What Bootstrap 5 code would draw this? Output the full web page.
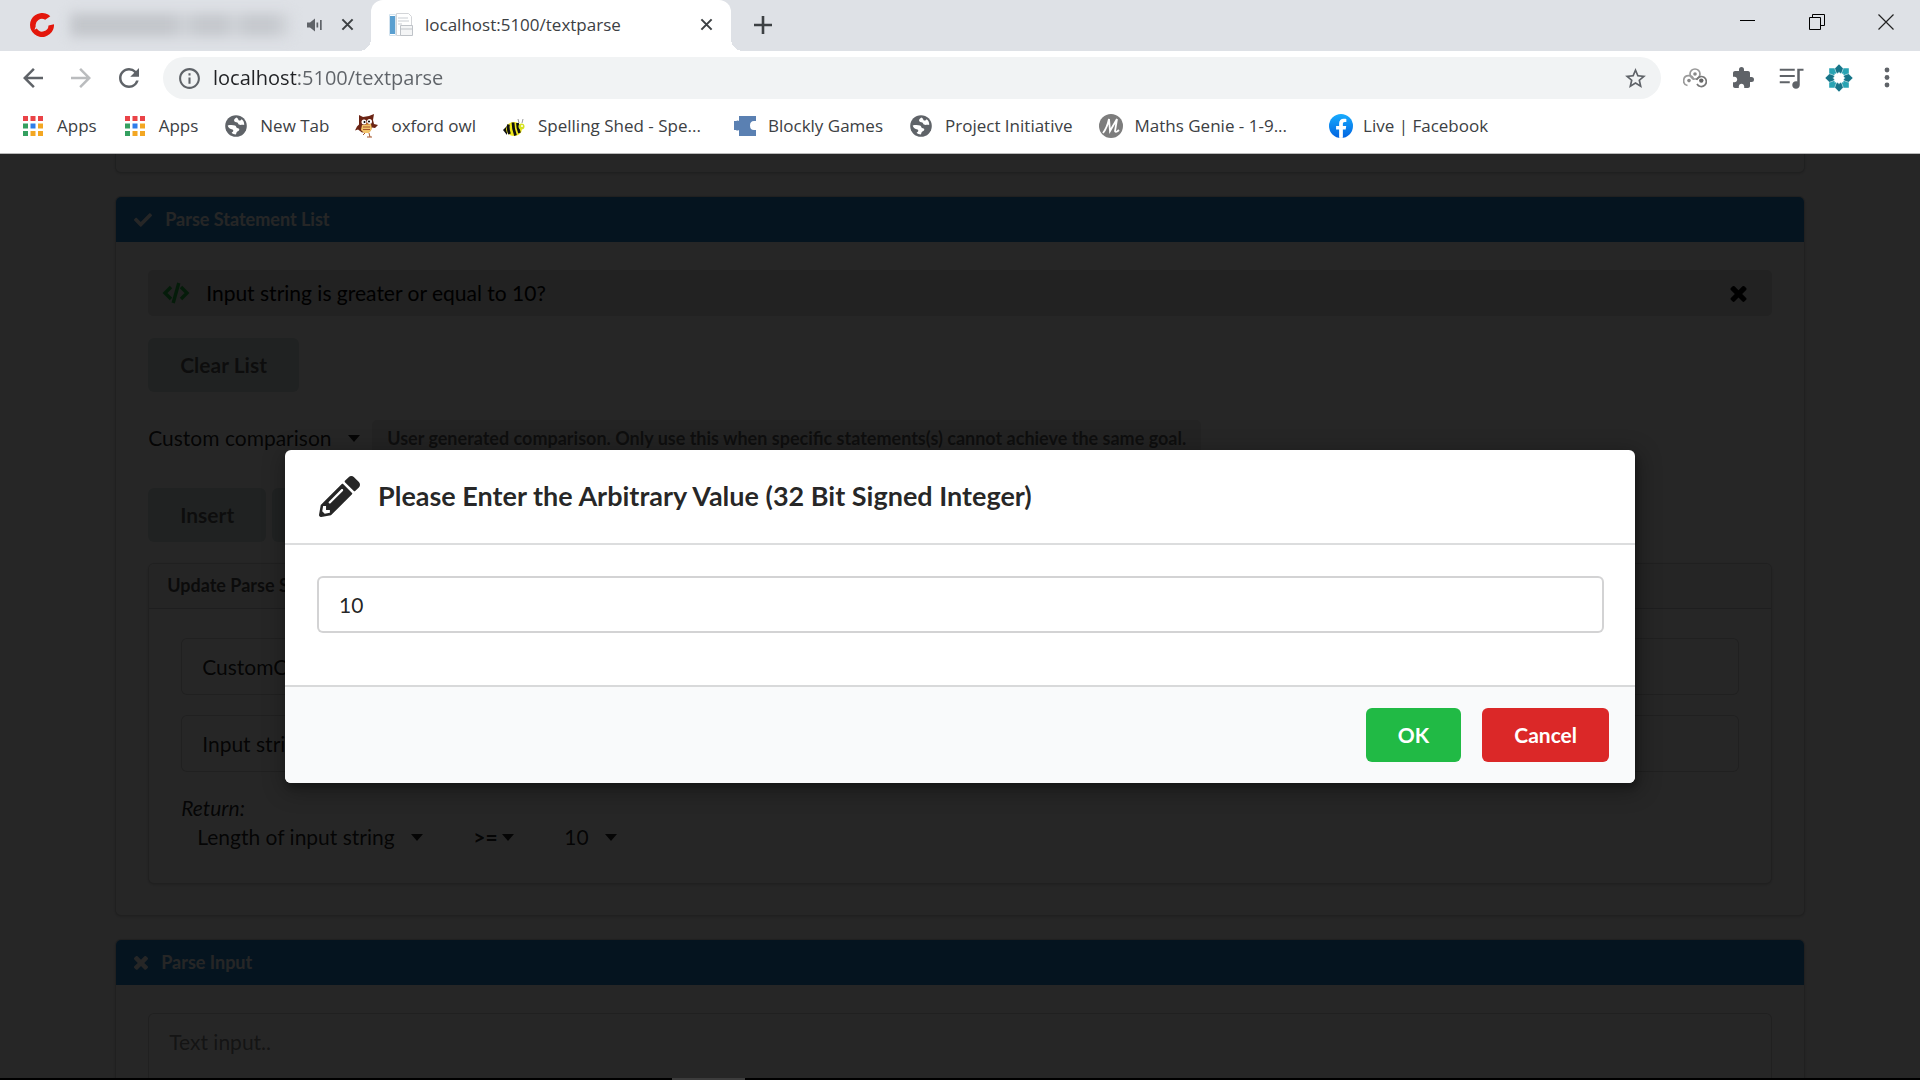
<!DOCTYPE html>
<html lang="en">
<head>
<meta charset="utf-8">
<meta name="viewport" content="width=device-width, initial-scale=1">
<title>localhost:5100/textparse</title>
<link href="https://cdn.jsdelivr.net/npm/bootstrap@5.3.0/dist/css/bootstrap.min.css" rel="stylesheet">
<style>
  :root { --line: rgba(34,36,38,.2); --ink: rgba(0,0,0,.87); }
  body { font-family: "Lato", sans-serif; font-size: 21px; line-height: 30px; color: var(--ink); overflow: hidden; background: #000; }
  svg { display: block; flex: none; }
  button.bare { border: 0; background: none; padding: 0; color: inherit; display: flex; align-items: center; justify-content: center; }

  /* browser frame */
  .chrome { font-family: "Open Sans", "Noto Sans", sans-serif; color: #3c4043; background: #fff; border-bottom: 1px solid #b9b9b9; }
  .tabstrip { background: #dee1e6; height: 51px; }
  .tab-item { height: 51px; padding: 0 18px 2px; }
  .tab-first { width: 371px; padding-left: 30px; padding-right: 17px; }
  .tab-first .bare { margin-left: 18px; }
  .tab-active { width: 360px; background: #fff; border-radius: 12px 12px 0 0; position: relative; font-size: 17px; gap: 12px; }
  .tab-active::before, .tab-active::after { content: ""; position: absolute; bottom: 0; width: 12px; height: 12px; }
  .tab-active::before { left: -12px; background: radial-gradient(circle at 0 0, transparent 12px, #fff 12px); }
  .tab-active::after { right: -12px; background: radial-gradient(circle at 100% 0, transparent 12px, #fff 12px); }
  .blurred { height: 24px; filter: blur(6px); background: linear-gradient(90deg, #c3c6cb 0 45%, #cfd2d7 52%, #c5c8cd 58% 70%, #d0d3d8 74%, #c6c9ce 80% 92%, #d6d9de); }
  .tabstrip .plus-btn { padding-bottom: 2px; width: 20px; margin-left: 22px; }
  .win-btn { width: 69px; height: 43px; }
  .toolbar { padding: 6px 18px 0; }
  .tool-group { gap: 18px; }
  .tool-btn { width: 30px; height: 30px; }
  .omnibox { background: #f1f3f4; border-radius: 21px; height: 42px; margin: 0 19px; padding: 0 11px; }
  .omnibox input { border: 0; outline: 0; padding: 0; margin-left: 9px; font-size: 20px; color: transparent; background: linear-gradient(90deg, #202124 84px, #5f6368 84px); -webkit-background-clip: text; background-clip: text; }
  .bookmarks { height: 54px; padding: 0 21px; gap: 26px; font-size: 17px; }
  .bookmarks a { color: #3c4043; text-decoration: none; gap: 12px; white-space: nowrap; }
  .bookmarks .bm-wide { min-width: 204px; }
  .bookmarks .bm-last { margin-left: 16px; gap: 10px; }

  /* page */
  .viewport { margin-bottom: 2px; background: #fff; }
  .page-col { width: 88%; margin: 0 auto; }
  .panel { border: 1px solid var(--line); border-radius: 6px; box-shadow: 0 1px 3px var(--line); margin-bottom: 23px; background: #fff; color: inherit; }
  .panel .panel-head { height: 45px; padding: 0 18px; font-size: 18px; font-weight: 700; background: #2185d0; color: #fff; border-radius: 5px 5px 0 0; gap: 13px; border: 0; }
  .panel .panel-body { padding: 28px 32px 31px; }
  .panel-tail { height: 19px; border-top: 0; border-radius: 0 0 6px 6px; }
  .inner { margin: 21px 0 0; }
  .inner .panel-head { background: #f3f4f5; color: rgba(0,0,0,.7); border-bottom: 1px solid var(--line); }
  .inner .panel-body { padding: 29px 32px 31px; }
  .statement { background: #e0e0e0; border-radius: 5px; height: 46px; padding: 0 25px 0 14px; gap: 16px; color: #000; }
  .btn-pad { font-size: 21px; line-height: 24px; font-weight: 700; padding: 15px 32px; border: 0; border-radius: 6px; }
  .btn-soft, .btn-soft:hover { background: #d6e2e2; color: rgba(0,0,0,.6); }
  .clear-btn { margin: 22px 0 28px; }
  .insert-row { gap: 6px; margin-top: 32px; }
  .field { font-family: inherit; font-size: 21px; line-height: 30px; height: 57px; padding: 0 20px; border: 2px solid var(--line); border-radius: 6px; color: var(--ink); }
  .panel .field { border-width: 1px; }
  .panel .field + .field { margin-top: 20px; }
  .panel textarea.field { height: 200px; padding: 13px 20px; }
  textarea.field::placeholder { color: rgba(120,120,120,.9); }
  .pick { appearance: none; border: 0; background: none; padding: 0; font: inherit; color: inherit; }
  .pick + svg { margin-left: 16px; }
  .pick-op + svg { margin-left: 4px; }
  .return-label { margin-top: 21px; line-height: 29px; }
  .return-row .pick ~ .pick { margin-left: 50px; }
  .hint { background: #e8e8e8; color: rgba(0,0,0,.6); font-size: 18px; font-weight: 700; line-height: 36px; padding: 0 15px; margin-left: 12px; border-radius: 5px; }

  /* dialog */
  .dimmer { background: rgba(0,0,0,.85); padding: 0 24px; }
  .dialog { width: 1350px; max-width: 100%; border: 0; border-radius: 6px; box-shadow: 2px 5px 5px rgba(0,0,0,.2), 2px 5px 22px 3px rgba(0,0,0,.3); }
  .dialog .modal-header { height: 95px; padding: 0 34px; justify-content: flex-start; gap: 18px; border-bottom: 2px solid #dcddde; }
  .dialog .modal-header h1 { font-size: 27px; line-height: 36px; font-weight: 700; margin: 0; color: rgba(0,0,0,.85); }
  .dialog .modal-body { padding: 31px 31px 52px 32px; flex: none; }
  .dialog .modal-footer { padding: 21px 26px; gap: 21px; background: #f9fafb; border-top: 2px solid #d8d9da; border-radius: 0 0 6px 6px; }
  .dialog .modal-footer > * { margin: 0; }
  .btn-ok { background: #21ba45; color: #fff; }
  .btn-no { background: #db2828; color: #fff; }
  .grip { position: absolute; left: 35%; bottom: 0; width: 73px; height: 2px; background: #3c3c3c; }
</style>
</head>
<body class="vh-100 d-flex flex-column position-relative">

<svg width="0" height="0" class="position-absolute" aria-hidden="true">
  <symbol id="i-caret" viewBox="0 0 12 7"><path d="M0 0h12L6 7z" fill="currentColor"/></symbol>
  <symbol id="i-times" viewBox="300 300 1192 1256"><path fill="currentColor" d="M1490 1322q0 40-28 68l-136 136q-28 28-68 28t-68-28l-294-294-294 294q-28 28-68 28t-68-28l-136-136q-28-28-28-68t28-68l294-294-294-294q-28-28-28-68t28-68l136-136q28-28 68-28t68 28l294 294 294-294q28-28 68-28t68 28l136 136q28 28 28 68t-28 68l-294 294 294 294q28 28 28 68z"/></symbol>
  <symbol id="i-apps" viewBox="0 0 20 20"><path fill="#ea4347" d="M0 0h5v5H0zM7.500 0h5v5h-5zM15 0h5v5h-5z"/><path fill="#34a060" d="M0 7.500h5v5H0zM0 15h5v5H0z"/><path fill="#2f7de9" d="M7.500 7.500h5v5h-5z"/><path fill="#f3a723" d="M15 7.500h5v5h-5zM7.500 15h5v5h-5zM15 15h5v5h-5z"/></symbol>
  <symbol id="i-globe" viewBox="0 0 22 22"><circle cx="11" cy="11" r="10.800" fill="#5f6368"/><path fill="#fff" d="M11.500 2.600c-1.600 1-2.600 2-2.400 3.200.3 1.400 2 1.200 3.200 1.600 1 .4.700 1.700 1.700 2.200 1.500.7 3-.1 5.200.5.200-2.800-.9-4.700-2.600-5.900-.6 1-1.700 1.700-2.700 1.200-.9-.5-.6-1.900-2.400-2.800zM2.700 10.400c2.300-.4 5.300-.6 7.300.2 1.400.6 1 1.900 2.100 2.500 1 .5 2.200.3 2.200 1.500 0 1.500-1.900 1.700-2.600 2.700-.5.700-.3 1.600-1 2.100-1.500-.1-3-.7-4-1.500.2-1 1.500-1.100 1.600-2.200.1-1.100-1.400-1.300-2.500-1.700-1.400-.6-2.600-1.700-3.100-3.600z"/></symbol>
  <symbol id="i-x" viewBox="0 0 14 14"><path d="M1.500 1.500l11 11M12.500 1.500l-11 11" stroke="#3c4043" stroke-width="2.200"/></symbol>
</svg>

<header class="chrome">
  <div class="tabstrip d-flex">
    <div class="tab-item tab-first d-flex align-items-center">
      <svg width="24" height="24" viewBox="0 0 24 24"><path fill="#e3170c" d="M20.300 3.300A12 12 0 1 0 24 11.300l-5.500 1.200a6.300 6.300 0 0 1-11.700 3l-2.300 1.200 1.200-3.500A6.300 6.300 0 0 1 15.200 6.800z"/></svg>
      <div class="blurred flex-grow-1 ms-3 me-3"></div>
      <svg width="16" height="14" viewBox="0 0 16 14"><path fill="#5f6368" d="M0 4.500h3L8 .5v13l-5-4H0zM9.500 4.500h1.700v5H9.500zM13 2h1.700v10H13z"/></svg>
      <button class="bare" aria-label="Close tab"><svg width="13" height="13"><use href="#i-x"/></svg></button>
    </div>
    <div class="tab-item tab-active d-flex align-items-center">
      <svg width="24" height="24" viewBox="0 0 24 24"><path fill="#fff" stroke="#d3d5d8" d="M7.500.5h12l3 3v19h-15z"/><path fill="#5a9fd0" d="M1 3h5v18H1z"/><path stroke="#d3e3ef" fill="none" d="M.5 1.500h6v21h-6z"/><path stroke="#c9cdd2" d="M9 5h10M9 8h11M9 11h4"/><path fill="#f4f5f6" stroke="#bfc3c8" d="M11.500 12.500h12v10h-12zM11.500 16h12"/></svg>
      <span class="flex-grow-1 text-truncate">localhost:5100/textparse</span>
      <button class="bare" aria-label="Close tab"><svg width="13" height="13"><use href="#i-x"/></svg></button>
    </div>
    <button class="bare plus-btn" aria-label="New tab"><svg width="20" height="20" viewBox="0 0 20 20"><path d="M10 1v18M1 10h18" stroke="#3c4043" stroke-width="2.600"/></svg></button>
    <div class="ms-auto d-flex">
      <button class="bare win-btn" aria-label="Minimize"><svg width="15" height="15" viewBox="0 0 15 15"><path d="M0 6.500h15" stroke="#000"/></svg></button>
      <button class="bare win-btn" aria-label="Restore"><svg width="16" height="16" viewBox="0 0 16 16"><path d="M.5 3.500h11v12H.5zM3.500 3V.5h12v11H12" fill="none" stroke="#000"/></svg></button>
      <button class="bare win-btn" aria-label="Close"><svg width="16" height="16" viewBox="0 0 16 16"><path d="M.5.5l15 15M15.500.5l-15 15" stroke="#222" stroke-width="1.200"/></svg></button>
    </div>
  </div>

  <div class="toolbar d-flex align-items-center">
    <div class="tool-group d-flex">
      <button class="bare tool-btn" aria-label="Back"><svg width="30" height="30" viewBox="0 0 24 24" fill="#5f6368"><path d="M20 11H7.830l5.590-5.590L12 4l-8 8 8 8 1.410-1.410L7.830 13H20v-2z"/></svg></button>
      <button class="bare tool-btn" aria-label="Forward"><svg width="30" height="30" viewBox="0 0 24 24" fill="#babcbe"><path d="M4 11h12.170l-5.590-5.590L12 4l8 8-8 8-1.410-1.410L16.170 13H4v-2z"/></svg></button>
      <button class="bare tool-btn" aria-label="Reload"><svg width="30" height="30" viewBox="0 0 24 24" fill="#5f6368"><path d="M17.650 6.350A7.958 7.958 0 0 0 12 4c-4.420 0-7.990 3.580-7.990 8s3.570 8 7.990 8c3.730 0 6.840-2.550 7.730-6h-2.080A5.990 5.990 0 0 1 12 18c-3.310 0-6-2.690-6-6s2.690-6 6-6c1.660 0 3.140.69 4.220 1.780L13 11h7V4l-2.350 2.350z"/></svg></button>
    </div>
    <div class="omnibox flex-grow-1 d-flex align-items-center">
      <button class="bare tool-btn" aria-label="Site information"><svg width="25" height="25" viewBox="0 0 24 24" fill="#5f6368"><path d="M11 17h2v-6h-2v6zm1-15C6.480 2 2 6.480 2 12s4.480 10 10 10 10-4.480 10-10S17.520 2 12 2zm0 18c-4.410 0-8-3.590-8-8s3.590-8 8-8 8 3.590 8 8-3.590 8-8 8zM11 9h2V7h-2v2z"/></svg></button>
      <input type="text" class="flex-grow-1" aria-label="Address" value="localhost:5100/textparse">
      <button class="bare tool-btn" aria-label="Bookmark this page"><svg width="25" height="25" viewBox="0 0 24 24" fill="#5f6368"><path d="M22 9.240l-7.190-.62L12 2 9.190 8.630 2 9.240l5.460 4.730L5.820 21 12 17.270 18.180 21l-1.630-7.030L22 9.240zM12 15.400l-3.760 2.270 1-4.280-3.320-2.880 4.380-.38L12 6.100l1.710 4.040 4.380.38-3.320 2.880 1 4.280L12 15.400z"/></svg></button>
    </div>
    <div class="tool-group d-flex">
      <button class="bare tool-btn" aria-label="Extension"><svg width="24" height="20" viewBox="0 0 24 20" fill="none" stroke="#9a9a9a" stroke-width="1.700"><path d="M4.500 17.500A5 5 0 1 1 10.600 12"/><circle cx="12" cy="6" r="5"/><path stroke="#777" d="M13.600 12A5 5 0 1 1 14 16"/><g stroke="none" fill="#888"><circle cx="12" cy="6" r="1.800"/><circle cx="6" cy="12.600" r="1.800"/><circle cx="18.300" cy="12.600" r="2.200" fill="#666"/></g></svg></button>
      <button class="bare tool-btn" aria-label="Extensions"><svg width="24" height="24" viewBox="0 0 24 24" fill="#5f6368"><path d="M20.500 11H19V7c0-1.100-.9-2-2-2h-4V3.500a2.500 2.500 0 0 0-5 0V5H4c-1.100 0-2 .9-2 2v3.800h1.500c1.500 0 2.700 1.200 2.700 2.700S5 16.200 3.500 16.200H2V20c0 1.100.9 2 2 2h3.800v-1.500c0-1.500 1.200-2.700 2.700-2.700s2.700 1.200 2.700 2.700V22H17c1.100 0 2-.9 2-2v-4h1.500a2.500 2.500 0 0 0 0-5z"/></svg></button>
      <button class="bare tool-btn" aria-label="Media controls"><svg width="30" height="30" viewBox="0 0 24 24" fill="#5f6368"><path d="M15 4.500H3v1.700h12zM15 9.500H3v1.700h12zM3 16.200h8v-1.700H3zM17 4.500v10.200c-.31-.11-.65-.18-1-.18-1.660 0-3 1.340-3 3s1.340 3 3 3 3-1.340 3-3V6.200h3V4.500h-5z"/></svg></button>
      <button class="bare tool-btn" aria-label="Profile"><svg width="28" height="28" viewBox="-14 -14 28 28"><g fill="#29a3b3"><path id="leaf" d="M9.800-9.800V-3L6-1.500 1.500-6 3-9.800z"/><use href="#leaf" transform="rotate(90)"/><use href="#leaf" transform="rotate(180)"/><use href="#leaf" transform="rotate(270)"/></g><g fill="#177488"><path id="petal" stroke="#e3f5f7" stroke-width=".6" d="M0-14l4.200 4.400L3-5.600 0-3.600l-3-2-1.200-4z"/><use href="#petal" transform="rotate(90)"/><use href="#petal" transform="rotate(180)"/><use href="#petal" transform="rotate(270)"/></g><path fill="#fff" d="M0-6.500l1.500 2.700L4.600-4.600 3.800-1.500 6.500 0 3.800 1.500l.8 3.100-3.100-.8L0 6.500l-1.500-2.700-3.100.8.8-3.100L-6.500 0l2.700-1.500-.8-3.100 3.100.8z"/></svg></button>
      <button class="bare tool-btn" aria-label="Menu"><svg width="6" height="22" viewBox="0 0 6 22" fill="#5f6368"><circle cx="3" cy="3" r="2.400"/><circle cx="3" cy="10.500" r="2.400"/><circle cx="3" cy="18" r="2.400"/></svg></button>
    </div>
  </div>

  <nav class="bookmarks d-flex align-items-center" aria-label="Bookmarks">
    <a href="#" class="d-flex align-items-center"><svg width="24" height="20"><use href="#i-apps"/></svg>Apps</a>
    <a href="#" class="d-flex align-items-center"><svg width="24" height="20"><use href="#i-apps"/></svg>Apps</a>
    <a href="#" class="d-flex align-items-center"><svg width="24" height="22"><use href="#i-globe"/></svg>New Tab</a>
    <a href="#" class="d-flex align-items-center"><svg width="24" height="24" viewBox="0 0 24 24"><path fill="#6b2414" d="M4 1l4 2 6-1 5-2-1 6 1 4 4 1-3 3-3-.500-2 4-8 1-4-3-3 1 2-4 2-2z"/><path fill="#f2c46b" d="M7 11l9-1 1 5-3 4H9l-3-3z"/><path stroke="#a4552b" d="M8 13h7M8 15.500h7M10 19l-2 2M14 19l1 4M12 23h5" fill="none"/><circle cx="9" cy="8" r="2.500" fill="#fff"/><circle cx="14.500" cy="7.500" r="2.500" fill="#fff"/><circle cx="9.500" cy="8" r="1"/><circle cx="14" cy="7.500" r="1"/><path fill="#f08a1d" d="M11 9.500h2l-1 2z"/></svg>oxford owl</a>
    <a href="#" class="bm-wide d-flex align-items-center"><svg width="24" height="22" viewBox="0 0 24 22"><path fill="#111" d="M1 15l4-4v9z"/><ellipse cx="12" cy="14" rx="8" ry="7" fill="#f0e81c"/><path stroke="#111" stroke-width="2.800" fill="none" d="M6.500 9.500q-1 4 1 9.500M11 7.500q0 6 2.500 13M15.500 8q0 5 2 10"/><circle cx="19.500" cy="11.500" r="3" fill="#d7e322"/><circle cx="20" cy="11" r="1" fill="#fff"/><path stroke="#999" fill="none" d="M17 8l-1-4M20 8l1-4"/></svg>Spelling Shed - Spe...</a>
    <a href="#" class="d-flex align-items-center"><svg width="24" height="22" viewBox="0 0 24 22"><path fill="#5a80b2" d="M7 1h17v5h-2q-4 0-4 4.500T22 15h2v6H7v-6q-2 1-3 0H2V6h2q2-1 3 0z"/></svg>Blockly Games</a>
    <a href="#" class="d-flex align-items-center"><svg width="24" height="22"><use href="#i-globe"/></svg>Project Initiative</a>
    <a href="#" class="d-flex align-items-center"><svg width="24" height="24" viewBox="0 0 24 24"><circle cx="12" cy="12" r="12" fill="#7d7d7d"/><path d="M4 19Q8 14 10 5l1 12L18 5l-2 12q1 2 4-1" fill="none" stroke="#fff" stroke-width="1.800"/></svg>Maths Genie - 1-9...</a>
    <a href="#" class="bm-last d-flex align-items-center"><svg width="24" height="24" viewBox="0 0 24 24"><defs><linearGradient id="fb" x2="0" y2="1"><stop stop-color="#18acfe"/><stop offset="1" stop-color="#0163e0"/></linearGradient></defs><circle cx="12" cy="12" r="12" fill="url(#fb)"/><path fill="#fff" d="M16.670 15.470l.53-3.470h-3.330V9.750c0-.95.470-1.870 1.960-1.870h1.510V4.920s-1.370-.23-2.690-.23c-2.740 0-4.530 1.660-4.530 4.670V12H7.080v3.470h3.040v8.380a12.100 12.100 0 0 0 3.750 0v-8.380z"/></svg>Live | Facebook</a>
  </nav>
</header>

<main class="viewport flex-grow-1 position-relative overflow-hidden">
  <div class="page-col">
    <section class="card panel panel-tail"></section>

    <section class="card panel">
      <h2 class="card-header panel-head d-flex align-items-center m-0">
        <svg width="18" height="18" viewBox="0 0 512 512" fill="currentColor"><path d="M173.898 439.404l-166.400-166.400c-9.997-9.997-9.997-26.206 0-36.204l36.203-36.204c9.997-9.998 26.207-9.998 36.204 0L192 312.690 432.095 72.596c9.997-9.997 26.207-9.997 36.204 0l36.203 36.204c9.997 9.997 9.997 26.206 0 36.204l-294.400 294.401c-9.998 9.997-26.207 9.997-36.204-.001z"/></svg>
        Parse Statement List
      </h2>
      <div class="card-body panel-body">
        <div class="statement d-flex align-items-center">
          <svg width="28" height="22" viewBox="0 0 28 22" fill="none" stroke="#21ba45" stroke-width="3.400"><path d="M9 5L3 11l6 6M19 5l6 6-6 6M16.800 1l-5.600 20"/></svg>
          <span class="flex-grow-1">Input string is greater or equal to 10?</span>
          <button class="bare" aria-label="Remove statement"><svg width="17" height="17"><use href="#i-times"/></svg></button>
        </div>
        <button class="btn btn-pad btn-soft clear-btn d-block">Clear List</button>
        <div class="d-flex align-items-center">
          <select class="pick" aria-label="Comparison"><option>Custom comparison</option></select>
          <svg width="12" height="7"><use href="#i-caret"/></svg>
          <span class="hint">User generated comparison. Only use this when specific statements(s) cannot achieve the same goal.</span>
        </div>
        <div class="insert-row d-flex">
          <button class="btn btn-pad btn-soft">Insert</button>
          <button class="btn btn-pad btn-soft">Update</button>
        </div>
        <div class="card panel inner">
          <h3 class="card-header panel-head d-flex align-items-center m-0">Update Parse Statement</h3>
          <div class="card-body panel-body">
            <input type="text" class="form-control field" aria-label="Statement name" value="CustomComparison">
            <input type="text" class="form-control field" aria-label="Statement text" value="Input string is greater or equal to 10?">
            <div class="return-label fst-italic">Return:</div>
            <div class="return-row d-flex align-items-center ps-3">
              <select class="pick" aria-label="Left value"><option>Length of input string</option></select>
              <svg width="12" height="7"><use href="#i-caret"/></svg>
              <select class="pick pick-op fw-bold" aria-label="Operator"><option>&gt;=</option></select>
              <svg width="12" height="7"><use href="#i-caret"/></svg>
              <select class="pick" aria-label="Right value"><option>10</option></select>
              <svg width="12" height="7"><use href="#i-caret"/></svg>
            </div>
          </div>
        </div>
      </div>
    </section>

    <section class="card panel">
      <h2 class="card-header panel-head d-flex align-items-center m-0">
        <svg width="14" height="15"><use href="#i-times"/></svg>
        Parse Input
      </h2>
      <div class="card-body panel-body">
        <textarea class="form-control field" rows="4" aria-label="Text input" placeholder="Text input.."></textarea>
      </div>
    </section>
  </div>

  <div class="modal dimmer d-flex position-absolute align-items-center justify-content-center overflow-hidden" role="dialog" aria-labelledby="dlg-title">
    <div class="modal-content dialog">
      <div class="modal-header">
        <svg width="41" height="41" viewBox="0 0 512 512" fill="#262626"><path d="M497.900 142.100l-46.100 46.100c-4.700 4.700-12.300 4.700-17 0l-111-111c-4.700-4.700-4.700-12.300 0-17l46.100-46.100c18.700-18.700 49.100-18.700 67.900 0l60.100 60.100c18.800 18.700 18.800 49.100 0 67.900zM284.200 99.800L21.600 362.400.4 483.900c-2.900 16.400 11.400 30.600 27.800 27.800l121.500-21.300 262.600-262.600c4.700-4.700 4.700-12.300 0-17l-111-111c-4.800-4.700-12.400-4.700-17.100 0zM124.100 339.900c-5.500-5.500-5.500-14.300 0-19.800l154-154c5.500-5.500 14.300-5.500 19.800 0s5.500 14.300 0 19.800l-154 154c-5.500 5.500-14.300 5.500-19.800 0zM88 424h48v36.300l-64.500 11.300-31.100-31.100L51.700 376H88v48z"/></svg>
        <h1 id="dlg-title">Please Enter the Arbitrary Value (32 Bit Signed Integer)</h1>
      </div>
      <div class="modal-body">
        <input type="text" class="form-control field" aria-labelledby="dlg-title" value="10">
      </div>
      <div class="modal-footer">
        <button class="btn btn-success btn-pad btn-ok">OK</button>
        <button class="btn btn-danger btn-pad btn-no">Cancel</button>
      </div>
    </div>
  </div>
</main>
<div class="grip"></div>

<script src="https://cdn.jsdelivr.net/npm/bootstrap@5.3.0/dist/js/bootstrap.bundle.min.js"></script>
</body>
</html>
